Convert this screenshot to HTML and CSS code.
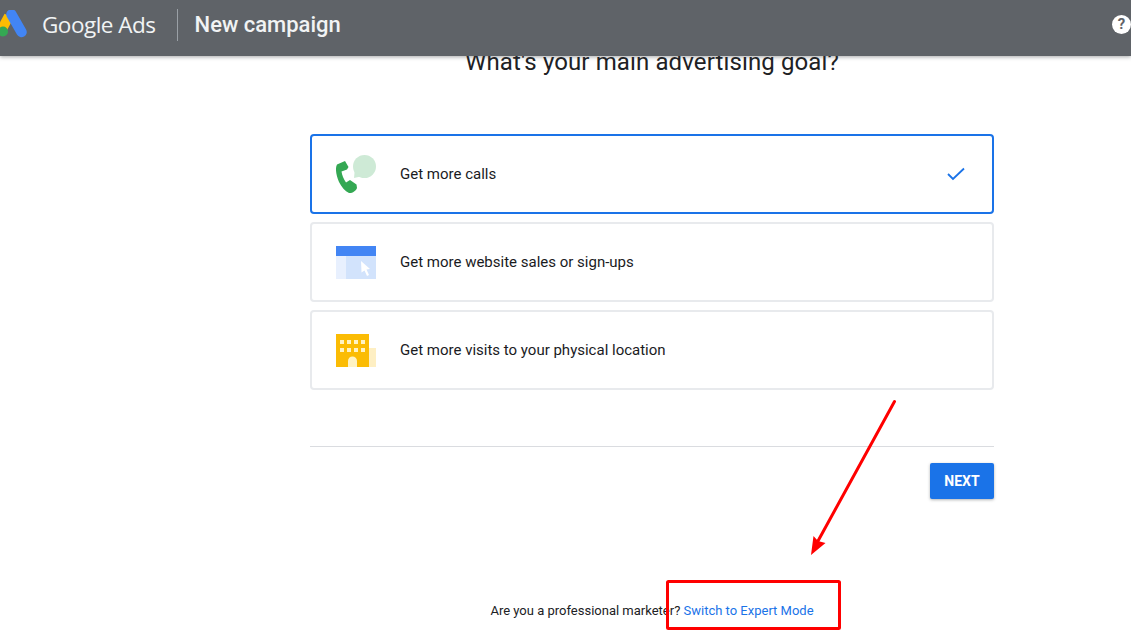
FILE: index.html
```html
<!DOCTYPE html>
<html lang="en">
<head>
<meta charset="utf-8">
<title>New campaign</title>
<link rel="stylesheet" href="styles.css">
</head>
<body>
<header class="topbar">
  <svg class="logo" width="28" height="28" viewBox="0 0 28 28" aria-hidden="true">
    <path d="M9 6 L1 21" stroke="#fbbc04" stroke-width="10" fill="none"/>
    <path d="M11.500 4.500 L21.500 22" stroke="#4285f4" stroke-width="10.500" stroke-linecap="round" fill="none"/>
    <circle cx="3" cy="21.500" r="5" fill="#34a853"/>
  </svg>
  <span class="brand">Google Ads</span>
  <span class="sep"></span>
  <span class="title">New campaign</span>
  <span class="help">?</span>
</header>
<main class="page">
  <h1 class="goal">What's your main advertising goal?</h1>
  <div class="cards">
    <div class="card selected">
      <svg class="ico" width="40" height="40" viewBox="0 0 40 40" aria-hidden="true">
        <circle cx="28.500" cy="11.500" r="11.500" fill="#ceead6"/>
        <path d="M18 23 L19 13 L27 21 Z" fill="#ceead6"/>
        <path d="M9 6 L1 9.500 C-1 13 0 20 3 27 C5.500 32 9 36 13 38 C16 38.500 20 36 21 33 L20.500 29.500 L14 25 L10 27.500 C7.500 24 6 20 5.500 16.500 L11 14.500 L12.500 12 Z" fill="#34a853"/>
      </svg>
      <span class="label">Get more calls</span>
      <svg class="check" width="18" height="14" viewBox="0 0 18 14" aria-hidden="true">
        <path d="M1 7 L6 12 L17 1.500" fill="none" stroke="#1a73e8" stroke-width="1.800"/>
      </svg>
    </div>
    <div class="card">
      <svg class="ico" width="40" height="34" viewBox="0 0 40 34" aria-hidden="true">
        <rect y="0" width="40" height="33" fill="#e8f0fe"/>
        <rect x="10" y="10" width="30" height="23" fill="#d2e3fc"/>
        <rect width="40" height="10" fill="#4285f4"/>
        <path d="M25 15 L34 23 L30.500 23.500 L33 29 L31 30 L28.500 24.500 L25.500 26.500 Z" fill="#fff"/>
      </svg>
      <span class="label">Get more website sales or sign-ups</span>
    </div>
    <div class="card">
      <svg class="ico" width="40" height="34" viewBox="0 0 40 34" aria-hidden="true">
        <rect x="33" y="14" width="7" height="19" fill="#feefc3"/>
        <rect width="33" height="33" fill="#fbbc04"/>
        <g fill="#fff3c4">
          <rect x="4" y="6" width="4" height="4"/><rect x="11" y="6" width="4" height="4"/><rect x="18" y="6" width="4" height="4"/><rect x="25" y="6" width="4" height="4"/>
          <rect x="4" y="14" width="4" height="4"/><rect x="11" y="14" width="4" height="4"/><rect x="18" y="14" width="4" height="4"/><rect x="25" y="14" width="4" height="4"/>
          <path d="M12 33 V27 A4.500 4.500 0 0 1 21 27 V33 Z"/>
        </g>
      </svg>
      <span class="label">Get more visits to your physical location</span>
    </div>
  </div>
  <hr class="rule">
  <div class="actions"><button class="next" type="button">NEXT</button></div>
  <p class="expert">Are you a professional marketer? <a class="link" href="#">Switch to Expert Mode</a></p>
</main>
<svg class="notes" width="1131" height="644" viewBox="0 0 1131 644" aria-hidden="true">
  <path d="M894.500 401.500 L818 541" stroke="#ff0000" stroke-width="3" stroke-linecap="round" fill="none"/>
  <path d="M811 555 L813.500 536 L818 541 L825.500 543 Z" fill="#ff0000"/>
  <rect x="667.500" y="581.500" width="172" height="47" rx="1" fill="none" stroke="#ff0000" stroke-width="3"/>
</svg>
</body>
</html>
```
FILE: styles.css
```css
* { box-sizing: border-box; }
html, body { margin: 0; height: 644px; overflow: hidden; background: #fff; }
body { font-family: Roboto, "Liberation Sans", sans-serif; color: #202124; position: relative; }

.topbar {
  position: relative;
  z-index: 2;
  height: 56px;
  padding-bottom: 6px;
  background: #5f6368;
  box-shadow: 0 1px 4px rgba(60, 64, 67, .45);
  display: flex;
  align-items: center;
  color: #fff;
}
.logo { margin: -3px 0 0; flex: none; }
.brand { margin-left: 14px; font: 400 22.500px/28px "Open Sans", Roboto, sans-serif; letter-spacing: -0.500px; color: #f1f3f4; }
.sep { width: 1px; height: 32px; background: #9aa0a6; margin-left: 21px; }
.title { margin-left: 17px; font-size: 22px; font-weight: 500; line-height: 28px; color: #f1f3f4; }
.help {
  position: absolute;
  left: 1112px;
  top: 15px;
  width: 19px;
  height: 19px;
  border-radius: 50%;
  background: #fff;
  color: #5f6368;
  font: 700 15px/19px Roboto, sans-serif;
  text-align: center;
}

.page { width: 684px; margin: -8px 0 0 310px; }
.goal {
  margin: 0 0 53px;
  height: 33px;
  font-size: 24px;
  font-weight: 400;
  line-height: 29px;
  text-align: center;
  letter-spacing: 0.120px;
  white-space: nowrap;
}
.cards { display: flex; flex-direction: column; gap: 8px; }
.card {
  height: 80px;
  border: 2px solid #e8eaed;
  border-radius: 4px;
  display: flex;
  align-items: center;
  padding: 2px 27px 0 24px;
}
.card.selected { border-color: #1a73e8; }
.ico { flex: none; }
.label { margin: -2px 0 0 24px; font-size: 15px; line-height: 20px; flex: 1; color: #1a1b1e; }
.check { flex: none; margin-top: -2px; }
.rule { margin: 56px 0 0; border: 0; border-top: 1px solid #dadce0; }
.actions { display: flex; justify-content: flex-end; margin-top: 16px; }
.next {
  width: 64px;
  height: 36px;
  border: 0;
  border-radius: 2px;
  background: #1a73e8;
  color: #fff;
  font: 700 14px/36px Roboto, sans-serif;
  box-shadow: 0 1px 3px rgba(60, 64, 67, .4);
  padding: 0;
}
.expert { margin: 103px 0 0; font-size: 13px; line-height: 18px; text-align: center; }
.link { color: #1a73e8; text-decoration: none; }
.notes { position: absolute; left: 0; top: 0; z-index: 3; pointer-events: none; }
```
